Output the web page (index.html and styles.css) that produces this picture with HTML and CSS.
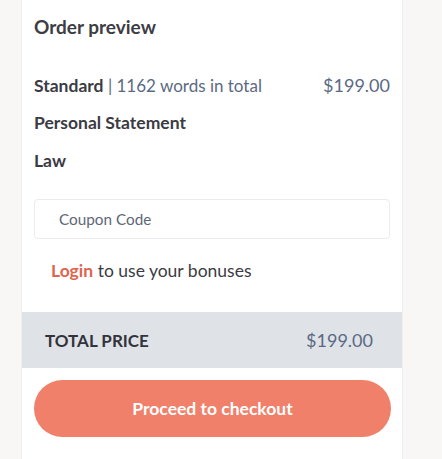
FILE: index.html
```html
<!DOCTYPE html>
<html lang="en">

<head>
  <meta charset="UTF-8">
  <title>Order preview</title>
  <link rel="stylesheet" href="styles.css">
</head>

<body>

  <div class="order">
    <h2 class="order-title">Order preview</h2>

    <div class="order-row">
      <span class="order-type"><b>Standard</b> <span class="order-words">| 1162 words in total</span></span>
      <span class="order-price">$199.00</span>
    </div>
    <div class="order-line">Personal Statement</div>
    <div class="order-line order-line-last">Law</div>

    <input class="coupon" type="text" placeholder="Coupon Code">

    <p class="bonus"><a href="#">Login</a> to use your bonuses</p>

    <div class="total">
      <span class="total-label">TOTAL PRICE</span>
      <span class="total-price">$199.00</span>
    </div>

    <button class="checkout">Proceed to checkout</button>
  </div>

</body>

</html>
```

FILE: styles.css
```css
* {
  box-sizing: border-box;
}

body {
  margin: 0;
  font-family: Lato, "Open Sans", sans-serif;
  background-color: #f8f7f6;
  color: #3b3b44;
}

/* ORDER CARD */

.order {
  margin-left: 21px;
  width: 382px;
  min-height: 459px;
  background: #ffffff;
  border-left: 1px solid #efefef;
  border-right: 1px solid #efefef;
  padding: 13px 12px 0;
}

.order-title {
  margin: 0 0 32px;
  font-size: 19px;
  line-height: 28px;
  font-weight: 700;
  color: #3d3d45;
}

.order-row {
  display: flex;
  justify-content: space-between;
  align-items: baseline;
  font-size: 17px;
  line-height: 24px;
}

.order-row b {
  font-weight: 700;
  font-size: 17.5px;
}

.order-words {
  color: #5b6a83;
}

.order-price {
  font-size: 18px;
  color: #5b6a83;
}

.order-line {
  margin-top: 13px;
  font-size: 17.5px;
  line-height: 24px;
  font-weight: 700;
}

.order-line-last {
  margin-top: 14px;
}

/* COUPON */

.coupon {
  display: block;
  width: 356px;
  height: 40px;
  margin-top: 26px;
  padding: 0 24px;
  border: 1px solid #ececec;
  border-radius: 4px;
  font-family: inherit;
  font-size: 15.3px;
  color: #3b3b44;
}

.coupon::placeholder {
  color: #5f6677;
}

.bonus {
  margin: 20px 0 0;
  padding-left: 17px;
  font-size: 17.5px;
  line-height: 24px;
}

.bonus a {
  color: #e0654f;
  font-weight: 700;
  text-decoration: none;
}

/* TOTAL */

.total {
  display: flex;
  justify-content: space-between;
  align-items: center;
  height: 56px;
  margin: 29px -12px 0;
  padding: 0 29px 0 23px;
  background: #dfe2e7;
  font-size: 17px;
}

.total-label {
  font-weight: 700;
  color: #33333b;
}

.total-price {
  font-size: 18px;
  color: #5b6a83;
}

.checkout {
  display: block;
  width: 357px;
  height: 57px;
  margin-top: 12px;
  border: 0;
  border-radius: 29px;
  background: #f0806a;
  color: #ffffff;
  font-family: inherit;
  font-size: 17.5px;
  font-weight: 700;
  cursor: pointer;
}
```
